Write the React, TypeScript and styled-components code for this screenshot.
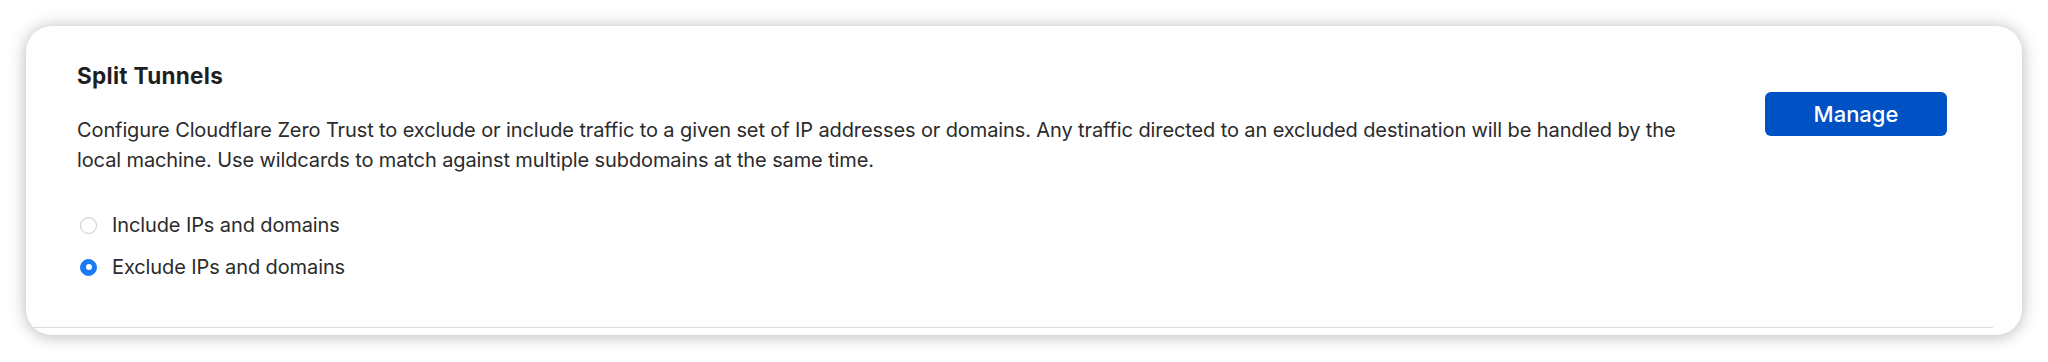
import React, { useState } from "react";
import styled, { createGlobalStyle } from "styled-components";

const GlobalStyle = createGlobalStyle`
  html, body {
    margin: 0;
    padding: 0;
    background: #ffffff;
  }
  body {
    font-family: Inter, "Noto Sans", "Liberation Sans", sans-serif;
    -webkit-font-smoothing: antialiased;
  }
`;

const Page = styled.div`
  padding: 26px;
  background: #ffffff;
`;

const Card = styled.section`
  background: #ffffff;
  border-radius: 26px;
  box-shadow: 0 0 18px rgba(0, 0, 0, 0.22), 0 4px 14px rgba(0, 0, 0, 0.08);
  overflow: hidden;
  padding-bottom: 7px;
`;

const Body = styled.div`
  display: flex;
  align-items: flex-start;
  padding: 37px 46px 39px 51px;
  border-bottom: 1px solid #dcdcdc;
  margin-right: 29px;
`;

const Main = styled.div`
  flex: 1;
  min-width: 0;
`;

const Title = styled.h2`
  margin: 0;
  font-size: 22.5px;
  line-height: 26px;
  font-weight: 700;
  letter-spacing: 0.3px;
  color: #1f1f1f;
`;

const Description = styled.p`
  margin: 26px 0 0;
  max-width: 1625px;
  font-size: 20px;
  line-height: 30px;
  font-weight: 400;
  letter-spacing: -0.11px;
  color: #2b2b2b;
`;

const Options = styled.div`
  display: flex;
  flex-direction: column;
  margin-top: 29px;
`;

const OptionRow = styled.label`
  display: flex;
  align-items: center;
  height: 42px;
  padding-left: 3px;
  gap: 15px;
  cursor: pointer;
`;

const RadioDot = styled.span<{ $checked: boolean }>`
  box-sizing: border-box;
  width: 17px;
  height: 17px;
  border-radius: 50%;
  flex: none;
  display: flex;
  align-items: center;
  justify-content: center;
  background: ${(p) => (p.$checked ? "#1a7bf6" : "#ffffff")};
  border: 1px solid ${(p) => (p.$checked ? "#1a7bf6" : "#cacaca")};
  box-shadow: ${(p) => (p.$checked ? "none" : "inset 0 1px 1px rgba(0,0,0,0.04)")};

  &::after {
    content: "";
    display: ${(p) => (p.$checked ? "block" : "none")};
    width: 6px;
    height: 6px;
    border-radius: 50%;
    background: #ffffff;
  }
`;

const OptionText = styled.span`
  font-size: 20px;
  line-height: 42px;
  letter-spacing: -0.11px;
  color: #2b2b2b;
`;

const Side = styled.div`
  flex: none;
  margin-top: 29px;
`;

const ManageButton = styled.button`
  box-sizing: border-box;
  width: 182px;
  height: 44px;
  border: none;
  border-radius: 6px;
  background: #0051c3;
  color: #ffffff;
  font-family: Inter, "Noto Sans", "Liberation Sans", sans-serif;
  font-size: 22px;
  font-weight: 500;
  cursor: pointer;
  padding: 0;
`;

const options = [
  { id: "include", label: "Include IPs and domains" },
  { id: "exclude", label: "Exclude IPs and domains" },
];

export default function App() {
  const [mode, setMode] = useState("exclude");
  return (
    <>
      <GlobalStyle />
      <Page>
        <Card>
          <Body>
            <Main>
              <Title>Split Tunnels</Title>
              <Description>
                Configure Cloudflare Zero Trust to exclude or include traffic to a given set of IP
                addresses or domains. Any traffic directed to an excluded destination will be handled
                by the local machine. Use wildcards to match against multiple subdomains at the same
                time.
              </Description>
              <Options>
                {options.map((o) => (
                  <OptionRow key={o.id} onClick={() => setMode(o.id)}>
                    <RadioDot $checked={mode === o.id} />
                    <OptionText>{o.label}</OptionText>
                  </OptionRow>
                ))}
              </Options>
            </Main>
            <Side>
              <ManageButton>Manage</ManageButton>
            </Side>
          </Body>
        </Card>
      </Page>
    </>
  );
}
